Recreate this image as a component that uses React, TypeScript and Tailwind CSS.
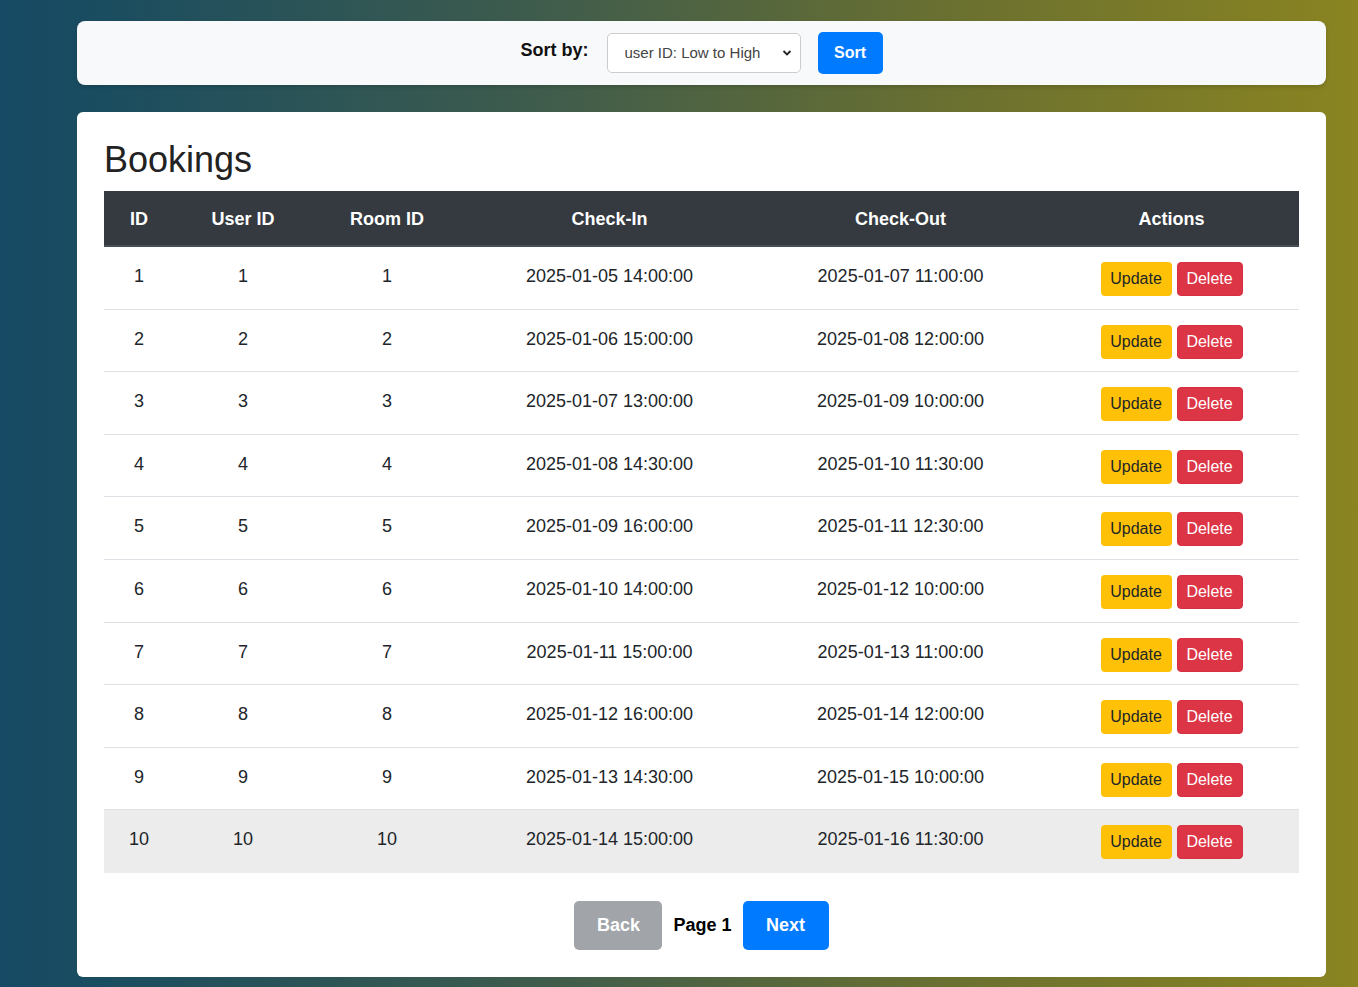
import React from "react";

const rows = [
  [1, 1, 1, "2025-01-05 14:00:00", "2025-01-07 11:00:00"],
  [2, 2, 2, "2025-01-06 15:00:00", "2025-01-08 12:00:00"],
  [3, 3, 3, "2025-01-07 13:00:00", "2025-01-09 10:00:00"],
  [4, 4, 4, "2025-01-08 14:30:00", "2025-01-10 11:30:00"],
  [5, 5, 5, "2025-01-09 16:00:00", "2025-01-11 12:30:00"],
  [6, 6, 6, "2025-01-10 14:00:00", "2025-01-12 10:00:00"],
  [7, 7, 7, "2025-01-11 15:00:00", "2025-01-13 11:00:00"],
  [8, 8, 8, "2025-01-12 16:00:00", "2025-01-14 12:00:00"],
  [9, 9, 9, "2025-01-13 14:30:00", "2025-01-15 10:00:00"],
  [10, 10, 10, "2025-01-14 15:00:00", "2025-01-16 11:30:00"],
];

const cols = "grid grid-cols-[70px_138px_150px_295px_287px_255px]";

export default function App() {
  return (
    <div
      className="min-h-screen w-full bg-[linear-gradient(to_right,#174a64_0%,#1b4d60_8%,#3f5c4c_40%,#6a7030_70%,#8a8421_100%)] pt-[21px] pb-[10px]"
      style={{ fontFamily: '"Liberation Sans", Arial, sans-serif' }}
    >
      <div className="mx-[77px] w-[1249px]">
        {/* Sort bar */}
        <div className="flex h-[64px] items-center justify-center rounded-[8px] bg-[#f8f9fa] shadow-[0_2px_4px_rgba(0,0,0,0.15)]">
          <span className="mr-[18px] mb-[6px] text-[18px] font-bold text-[#111]">Sort by:</span>
          <div className="relative mr-[17px] h-[40px] w-[194px] rounded-[5px] border border-[#ccc] bg-white">
            <select className="h-full w-full appearance-none bg-transparent pl-[17px] text-[15px] text-[#444] outline-none">
              <option>user ID: Low to High</option>
            </select>
            <svg className="pointer-events-none absolute right-[8px] top-[15px]" width="10" height="8" viewBox="0 0 10 8">
              <path d="M1.5 2 L5 5.5 L8.5 2" fill="none" stroke="#222" strokeWidth="1.8" />
            </svg>
          </div>
          <button className="h-[42px] w-[65px] rounded-[5px] bg-[#007bff] text-[16px] font-bold text-white">
            Sort
          </button>
        </div>

        {/* Main card */}
        <div className="mt-[27px] rounded-[6px] bg-white p-[27px]">
          <h1 className="mb-[10px] text-[36px] leading-[42px] font-normal text-[#222]">Bookings</h1>
          <div className="w-[1195px] text-[18px] text-[#212529]">
            <div className={`${cols} h-[56px] items-center border-b-2 border-[#484e55] bg-[#343a40] pt-[3px] text-center font-bold text-white`}>
              <div>ID</div>
              <div>User ID</div>
              <div>Room ID</div>
              <div>Check-In</div>
              <div>Check-Out</div>
              <div>Actions</div>
            </div>
            {rows.map((r, i) => (
              <div
                key={i}
                className={`${cols} h-[62.6px] text-center ${
                  i === rows.length - 1 ? "bg-[#ececec]" : "border-b border-[#dee2e6]"
                }`}
              >
                <div className="pt-[16px]">{r[0]}</div>
                <div className="pt-[16px]">{r[1]}</div>
                <div className="pt-[16px]">{r[2]}</div>
                <div className="pt-[16px]">{r[3]}</div>
                <div className="pt-[16px]">{r[4]}</div>
                <div className="flex justify-center gap-[5px] pt-[15px]">
                  <button className="h-[34px] w-[71px] rounded-[4px] bg-[#ffc107] text-[16px] text-[#212529]">
                    Update
                  </button>
                  <button className="h-[34px] w-[66px] rounded-[4px] border border-[#d52f40] bg-[#dc3545] text-[16px] text-white">
                    Delete
                  </button>
                </div>
              </div>
            ))}
          </div>
          <div className="mt-[28px] flex items-center justify-center">
            <button className="h-[49px] w-[88px] rounded-[5px] bg-[#a1a5aa] text-[18px] font-bold text-white">
              Back
            </button>
            <span className="mx-[11px] text-[18px] font-bold text-black">Page 1</span>
            <button className="h-[49px] w-[86px] rounded-[5px] bg-[#007bff] text-[18px] font-bold text-white">
              Next
            </button>
          </div>
        </div>
      </div>
    </div>
  );
}
